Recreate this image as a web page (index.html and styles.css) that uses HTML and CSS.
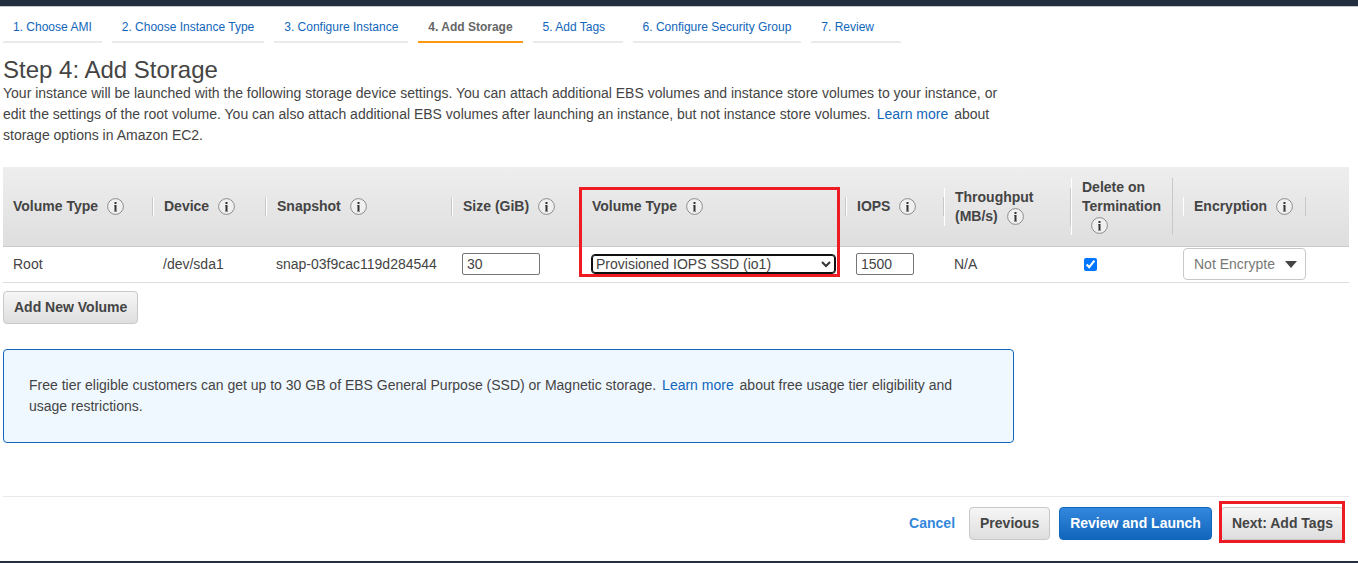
FILE: index.html
```
<!DOCTYPE html>
<html lang="en">
<head>
<meta charset="utf-8">
<title>Step 4: Add Storage</title>
<link rel="stylesheet" href="styles.css">
</head>
<body>
<svg class="defs" aria-hidden="true">
  <symbol id="info" viewBox="0 0 17 17">
    <circle cx="8.5" cy="8.5" r="7.9" fill="#f0f0f0" stroke="#8c8c8c"/>
    <path d="M7.5 4h2v2h-2zM7 7h2.5v6H10v.6H7V13h.5V7.6H7z" fill="#333"/>
  </symbol>
</svg>
<header class="topbar"></header>
<div class="page">
  <nav class="steps">
    <a class="step" href="#">1. Choose AMI</a>
    <a class="step" href="#">2. Choose Instance Type</a>
    <a class="step" href="#">3. Configure Instance</a>
    <a class="step active" href="#" aria-current="step">4. Add Storage</a>
    <a class="step" href="#">5. Add Tags</a>
    <a class="step" href="#">6. Configure Security Group</a>
    <a class="step" href="#">7. Review</a>
  </nav>
  <main>
    <h1 class="title">Step 4: Add Storage</h1>
    <p class="intro">Your instance will be launched with the following storage device settings. You can attach additional EBS volumes and instance store volumes to your instance, or edit the settings of the root volume. You can also attach additional EBS volumes after launching an instance, but not instance store volumes. <a class="link" href="#">Learn more</a> about storage options in Amazon EC2.</p>
    <table class="volumes">
      <colgroup>
        <col class="c-type"><col class="c-device"><col class="c-snapshot"><col class="c-size"><col class="c-voltype"><col class="c-iops"><col class="c-throughput"><col class="c-delete"><col>
      </colgroup>
      <thead>
        <tr>
          <th scope="col"><div class="head first">Volume Type<wbr><svg class="info"><use href="#info"/></svg></div></th>
          <th scope="col"><div class="head">Device<wbr><svg class="info"><use href="#info"/></svg></div></th>
          <th scope="col"><div class="head">Snapshot<wbr><svg class="info"><use href="#info"/></svg></div></th>
          <th scope="col"><div class="head">Size (GiB)<wbr><svg class="info"><use href="#info"/></svg></div></th>
          <th scope="col" class="marked"><div class="head">Volume Type<wbr><svg class="info"><use href="#info"/></svg></div><span class="marker"></span></th>
          <th scope="col"><div class="head">IOPS<wbr><svg class="info"><use href="#info"/></svg></div></th>
          <th scope="col"><div class="head">Throughput (MB/s)<wbr><svg class="info"><use href="#info"/></svg></div></th>
          <th scope="col"><div class="head">Delete on Termination<wbr><svg class="info"><use href="#info"/></svg></div></th>
          <th scope="col" class="last"><div class="head">Encryption<wbr><svg class="info"><use href="#info"/></svg></div></th>
        </tr>
      </thead>
      <tbody>
        <tr>
          <td>Root</td>
          <td>/dev/sda1</td>
          <td>snap-03f9cac119d284544</td>
          <td><input class="field size" type="text" value="30" aria-label="Size (GiB)"></td>
          <td><span class="select-wrap"><select class="vol-select" aria-label="Volume Type"><option>Provisioned IOPS SSD (io1)</option></select><svg class="chevron" viewBox="0 0 10 7"><path d="M1 1l4 4 4-4" fill="none" stroke="#333" stroke-width="2"/></svg></span></td>
          <td><input class="field iops" type="text" value="1500" aria-label="IOPS"></td>
          <td>N/A</td>
          <td><input class="check" type="checkbox" checked aria-label="Delete on Termination"></td>
          <td><span class="select-wrap"><select class="enc-select" aria-label="Encryption"><option>Not Encrypted</option></select><svg class="caret" viewBox="0 0 12 7"><path d="M0 0h12L6 7z" fill="#444"/></svg></span></td>
        </tr>
      </tbody>
    </table>
    <button class="btn" type="button">Add New Volume</button>
    <p class="notice">Free tier eligible customers can get up to 30 GB of EBS General Purpose (SSD) or Magnetic storage. <a class="link" href="#">Learn more</a> about free usage tier eligibility and usage restrictions.</p>
  </main>
  <footer class="actions">
    <a class="cancel" href="#">Cancel</a>
    <button class="btn" type="button">Previous</button>
    <button class="btn primary" type="button">Review and Launch</button>
    <span class="next"><button class="btn" type="button">Next: Add Tags</button><span class="marker"></span></span>
  </footer>
</div>
<div class="bottombar"></div>
</body>
</html>
```
FILE: styles.css
```
* { box-sizing: border-box; }
body {
  margin: 0;
  background: #fff;
  color: #444;
  font: 14px/21px "Liberation Sans", Arial, sans-serif;
}
.defs { display: none; }
.topbar {
  height: 7px;
  background: #232f3e;
  border-bottom: 1px solid #c4c8cc;
}
.page { padding: 0 9px 0 3px; }

.steps { display: flex; gap: 10px; padding-top: 10px; }
.step {
  min-width: 90px;
  padding: 0 10px 4px;
  border-bottom: 2px solid #eaeaea;
  color: #1166bb;
  font-size: 12px;
  line-height: 20px;
  text-decoration: none;
  white-space: nowrap;
}
.step.active { border-color: #ff9914; color: #666; font-weight: bold; }

.title { margin: 13px 0 0; font-size: 24px; line-height: 27px; font-weight: normal; }
.intro { max-width: 1011px; margin: 0 0 21px; }
.link { margin: 0 2px; color: #1166bb; text-decoration: none; }

.volumes { width: 100%; table-layout: fixed; border-collapse: separate; border-spacing: 0; }
.c-type { width: 150px; }
.c-device { width: 113px; }
.c-snapshot { width: 186px; }
.c-size { width: 129px; }
.c-voltype { width: 265px; }
.c-iops { width: 98px; }
.c-throughput { width: 127px; }
.c-delete { width: 102px; }
.volumes thead { background: linear-gradient(#eee, #dedede); }
.volumes th {
  height: 80px;
  padding: 0;
  border-bottom: 1px solid #c8c8c8;
  text-align: left;
  vertical-align: middle;
  line-height: 19px;
}
.head {
  padding-left: 10px;
  border-left: 1px solid #fff;
  border-right: 1px solid #c8c8c8;
}
.head.first { border-left: 0; }
.volumes .last { padding-left: 10px; }
.last .head { width: 123px; }
.info { width: 17px; height: 17px; margin: -2px 0 0 9px; vertical-align: -4px; }
.volumes td {
  height: 36px;
  padding: 0 0 1px 10px;
  border-bottom: 1px solid #ddd;
  vertical-align: middle;
  white-space: nowrap;
}
.marked, .next { position: relative; }
.marker {
  position: absolute;
  z-index: 1;
  border: 3px solid #ed1c24;
  pointer-events: none;
}
.marked .marker { inset: 20px 6px -31px -2px; }
.field {
  display: block;
  height: 22px;
  padding: 0 4px;
  border: 1px solid #767676;
  border-radius: 2px;
  color: #444;
  font: inherit;
}
.size { width: 78px; }
.iops { width: 58px; }
.select-wrap { display: grid; width: max-content; align-items: center; }
.select-wrap > * { grid-area: 1 / 1; }
.vol-select, .enc-select { appearance: none; background: #fff; font: inherit; }
.vol-select {
  width: 245px;
  height: 20px;
  padding: 0 4px;
  border: 1px solid #101010;
  border-radius: 4px;
  box-shadow: inset 0 0 0 1px #101010;
  color: #444;
  line-height: 18px;
}
.enc-select {
  width: 123px;
  height: 32px;
  padding: 0 30px 0 10px;
  border: 1px solid #c8c8c8;
  border-radius: 4px;
  color: #777;
}
.chevron, .caret { justify-self: end; pointer-events: none; }
.chevron { width: 10px; height: 7px; margin-right: 5px; }
.caret { width: 12px; height: 7px; margin-right: 9px; }
.check { display: block; width: 13px; height: 13px; margin: 0 0 0 3px; accent-color: #0075ff; }

.btn {
  height: 33px;
  padding: 0 10px;
  border: 1px solid #c8c8c8;
  border-radius: 4px;
  background: linear-gradient(#f6f6f6, #dedede);
  color: #444;
  font: bold 14px/21px "Liberation Sans", Arial, sans-serif;
  white-space: nowrap;
}
.btn.primary { border-color: #1166bb; background: linear-gradient(#3388dd, #1166bb); color: #fff; }
main > .btn { display: block; margin-top: 8px; }
.notice {
  max-width: 1011px;
  margin: 25px 0 53px;
  padding: 25px;
  border: 1px solid #1166bb;
  border-radius: 4px;
  background: #f0f8ff;
}
.actions {
  display: flex;
  justify-content: flex-end;
  align-items: center;
  gap: 9px;
  padding: 10px 5px 21px 0;
  border-top: 1px solid #eaeaea;
}
.cancel { margin-right: 5px; color: #3388dd; font-weight: bold; text-decoration: none; }
.next { display: flex; }
.next .marker { inset: -6px -1px -3px -2px; }
.bottombar { height: 2px; background: #232f3e; }
```
